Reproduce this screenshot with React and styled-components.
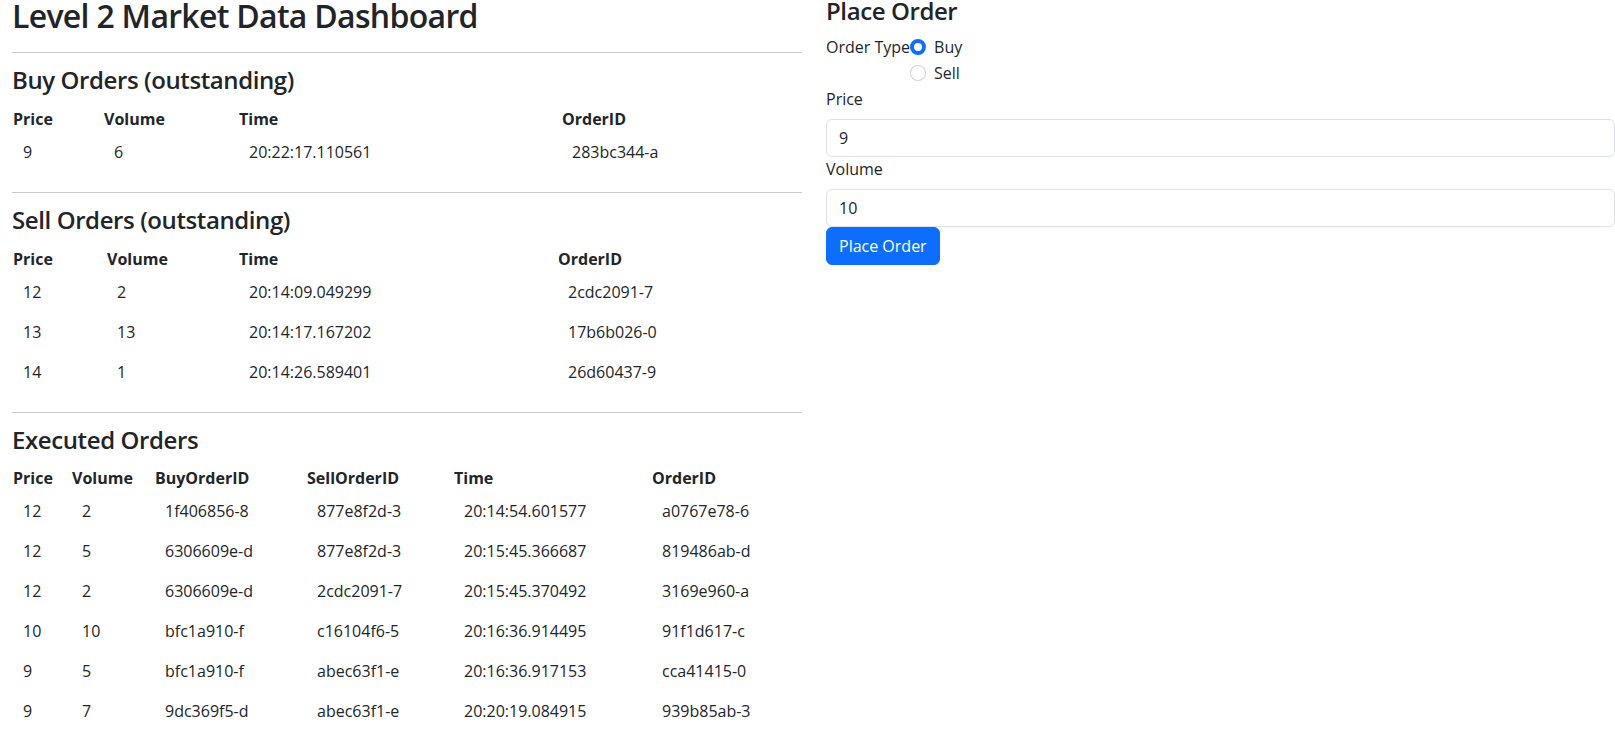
import React from "react";
import styled, { createGlobalStyle } from "styled-components";

const GlobalStyle = createGlobalStyle`
  html, body {
    margin: 0;
    padding: 0;
    overflow: hidden;
  }
  body {
    font-family: "Open Sans", "Noto Sans", sans-serif;
    font-size: 16px;
    line-height: 1.5;
    color: #212529;
    background: #fff;
  }
  *, *::before, *::after { box-sizing: border-box; }
`;

const Page = styled.div`
  display: grid;
  grid-template-columns: 790px 1fr;
  column-gap: 24px;
  padding-left: 12px;
  align-items: start;
`;

const Column = styled.section`
  display: flex;
  flex-direction: column;
  min-width: 0;
`;

const Title = styled.h1`
  margin: 0 0 20px;
  font-size: 32px;
  line-height: 32px;
  font-weight: 600;
  letter-spacing: -0.7px;
`;

const Divider = styled.hr`
  margin: 0 0 13px;
  border: 0;
  border-top: 1px solid #c8c9ca;
  width: 100%;
`;

const SectionTitle = styled.h2`
  margin: 0 0 11px;
  font-size: 24px;
  line-height: 28.8px;
  font-weight: 600;
  letter-spacing: -0.4px;
`;

const Table = styled.table`
  width: 100%;
  border-collapse: collapse;
  table-layout: fixed;
  margin-bottom: ${(p) => (p.$last ? 0 : 20)}px;
`;

const Th = styled.th`
  text-align: left;
  padding: 1px;
  font-weight: 700;
  line-height: 24px;
  width: ${(p) => p.$w}px;
  white-space: nowrap;
`;

const Td = styled.td`
  padding: 8px 11px;
  line-height: 24px;
  white-space: nowrap;
`;

const FormTitle = styled.h2`
  margin: 0 0 13.7px;
  font-size: 24px;
  line-height: 21.6px;
  font-weight: 600;
  letter-spacing: -0.4px;
`;

const TypeRow = styled.div`
  display: flex;
  align-items: flex-start;
`;

const TypeLabel = styled.span`
  line-height: 24px;
`;

const RadioGroup = styled.div`
  display: flex;
  flex-direction: column;
`;

const RadioItem = styled.label`
  display: flex;
  align-items: flex-start;
  gap: 8px;
  min-height: 24px;
  margin-bottom: 2px;
  line-height: 24px;
`;

const Radio = styled.input.attrs({ type: "radio" })`
  appearance: none;
  width: 16px;
  height: 16px;
  margin: 4px 0 0;
  border-radius: 50%;
  border: 1px solid rgba(0, 0, 0, 0.175);
  background: #fff;
  flex: none;
  &:checked {
    border: 4px solid #0d6efd;
  }
`;

const FieldLabel = styled.label`
  display: block;
  margin-bottom: 8px;
  line-height: 24px;
`;

const Input = styled.input`
  display: block;
  width: 100%;
  padding: 6px 12px;
  font-family: inherit;
  font-size: 16px;
  line-height: 24px;
  color: #212529;
  background: #fff;
  border: 1px solid #dee2e6;
  border-radius: 6px;
  outline: none;
  appearance: textfield;
  &::-webkit-inner-spin-button,
  &::-webkit-outer-spin-button {
    -webkit-appearance: none;
    margin: 0;
  }
`;

const Button = styled.button`
  align-self: flex-start;
  padding: 6px 12px;
  font-family: inherit;
  font-size: 16px;
  line-height: 24px;
  color: #fff;
  background: #0d6efd;
  border: 1px solid #0d6efd;
  border-radius: 6px;
  cursor: pointer;
`;

const buyOrders = [["9", "6", "20:22:17.110561", "283bc344-a"]];

const sellOrders = [
  ["12", "2", "20:14:09.049299", "2cdc2091-7"],
  ["13", "13", "20:14:17.167202", "17b6b026-0"],
  ["14", "1", "20:14:26.589401", "26d60437-9"],
];

const executed = [
  ["12", "2", "1f406856-8", "877e8f2d-3", "20:14:54.601577", "a0767e78-6"],
  ["12", "5", "6306609e-d", "877e8f2d-3", "20:15:45.366687", "819486ab-d"],
  ["12", "2", "6306609e-d", "2cdc2091-7", "20:15:45.370492", "3169e960-a"],
  ["10", "10", "bfc1a910-f", "c16104f6-5", "20:16:36.914495", "91f1d617-c"],
  ["9", "5", "bfc1a910-f", "abec63f1-e", "20:16:36.917153", "cca41415-0"],
  ["9", "7", "9dc369f5-d", "abec63f1-e", "20:20:19.084915", "939b85ab-3"],
];

function DataTable({ columns, widths, rows, last }) {
  return (
    <Table $last={last}>
      <thead>
        <tr>
          {columns.map((c, i) => (
            <Th key={c} $w={widths[i]}>
              {c}
            </Th>
          ))}
        </tr>
      </thead>
      <tbody>
        {rows.map((r, ri) => (
          <tr key={ri}>
            {r.map((v, ci) => (
              <Td key={ci}>{v}</Td>
            ))}
          </tr>
        ))}
      </tbody>
    </Table>
  );
}

export default function App() {
  return (
    <>
      <GlobalStyle />
      <Page>
        <Column>
          <Title>Level 2 Market Data Dashboard</Title>
          <Divider />
          <SectionTitle>Buy Orders (outstanding)</SectionTitle>
          <DataTable
            columns={["Price", "Volume", "Time", "OrderID"]}
            widths={[91, 135, 323, 241]}
            rows={buyOrders}
          />
          <Divider />
          <SectionTitle>Sell Orders (outstanding)</SectionTitle>
          <DataTable
            columns={["Price", "Volume", "Time", "OrderID"]}
            widths={[94, 132, 319, 245]}
            rows={sellOrders}
          />
          <Divider />
          <SectionTitle>Executed Orders</SectionTitle>
          <DataTable
            columns={["Price", "Volume", "BuyOrderID", "SellOrderID", "Time", "OrderID"]}
            widths={[59, 83, 152, 147, 198, 151]}
            rows={executed}
            last
          />
        </Column>
        <Column>
          <FormTitle>Place Order</FormTitle>
          <TypeRow>
            <TypeLabel>Order Type</TypeLabel>
            <RadioGroup>
              <RadioItem>
                <Radio name="orderType" value="buy" defaultChecked />
                Buy
              </RadioItem>
              <RadioItem>
                <Radio name="orderType" value="sell" />
                Sell
              </RadioItem>
            </RadioGroup>
          </TypeRow>
          <FieldLabel htmlFor="price">Price</FieldLabel>
          <Input id="price" type="number" defaultValue="9" />
          <FieldLabel htmlFor="volume">Volume</FieldLabel>
          <Input id="volume" type="number" defaultValue="10" />
          <Button type="button">Place Order</Button>
        </Column>
      </Page>
    </>
  );
}
